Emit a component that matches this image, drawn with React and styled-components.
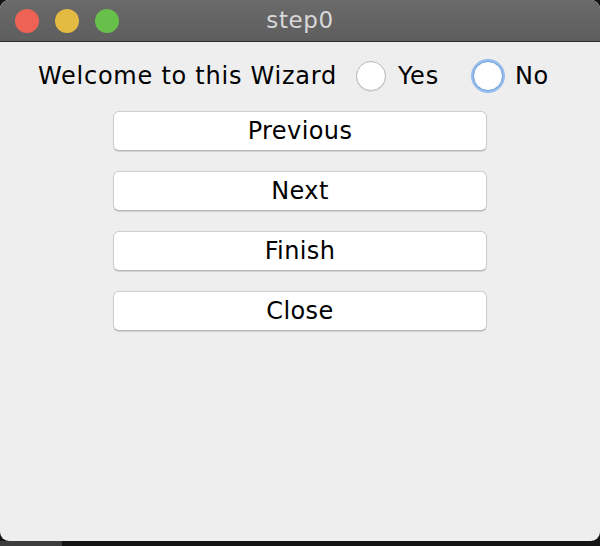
import React from "react";
import styled, { createGlobalStyle } from "styled-components";

const Global = createGlobalStyle`
  html, body { margin: 0; padding: 0; background: #141414; }
  body { width: 600px; height: 546px; overflow: hidden; font-family: "DejaVu Sans", "Liberation Sans", sans-serif; }
`;

const Window = styled.div`
  width: 600px;
  height: 541px;
  display: flex;
  flex-direction: column;
  border-radius: 9px;
  overflow: hidden;
  background: #eeeeee;
`;

const Dock = styled.div`
  height: 5px;
  display: flex;
`;

const DockPiece = styled.span`
  width: 62px;
  background: #3c3c3c;
`;

const TitleBar = styled.div`
  height: 41px;
  flex: none;
  display: grid;
  grid-template-columns: 1fr auto 1fr;
  align-items: center;
  background: linear-gradient(#6b6a6b, #5f5e5f);
  border-bottom: 1px solid #2c2c2c;
`;

const Lights = styled.div`
  display: flex;
  gap: 16px;
  padding-left: 15px;
`;

const Light = styled.span`
  width: 24px;
  height: 24px;
  border-radius: 50%;
  background: ${(p) => p.$c};
`;

const Title = styled.div`
  color: #d8d8d8;
  font-size: 23px;
  letter-spacing: 0.6px;
  padding-bottom: 1px;
`;

const Content = styled.div`
  flex: 1;
  display: flex;
  flex-direction: column;
  align-items: center;
  padding-top: 16px;
`;

const Row = styled.div`
  display: flex;
  align-items: center;
  height: 36px;
  color: #000;
  font-size: 24px;
  letter-spacing: 0.75px;
  margin-right: 13px;
`;

const Label = styled.span`
  margin-right: 19px;
`;

const RadioItem = styled.label`
  display: flex;
  align-items: center;
  margin-right: ${(p) => p.$mr}px;
`;

const Circle = styled.span`
  width: 30px;
  height: 30px;
  box-sizing: border-box;
  border-radius: 50%;
  background: #fff;
  border: 1px solid ${(p) => (p.$focus ? "#6a9ee0" : "#b9b9b9")};
  box-shadow: ${(p) =>
    p.$focus ? "0 0 0 2px rgba(120,170,235,0.75)" : "0 1px 1px rgba(0,0,0,0.08)"};
  margin-right: 12px;
`;

const Buttons = styled.div`
  display: flex;
  flex-direction: column;
  gap: 20px;
  margin-top: 17px;
`;

const Button = styled.button`
  width: 374px;
  height: 40px;
  background: #fff;
  border: 1px solid #cfcfcf;
  border-bottom-color: #b4b4b4;
  border-radius: 6px;
  box-shadow: 0 1px 1px rgba(0,0,0,0.12);
  font-family: "DejaVu Sans", "Liberation Sans", sans-serif;
  font-size: 24px;
  letter-spacing: 0.4px;
  color: #000;
  padding: 0;
`;

export default function App() {
  return (
    <>
      <Global />
      <Window>
        <TitleBar>
          <Lights>
            <Light $c="#ee6155" />
            <Light $c="#e3bb43" />
            <Light $c="#66c049" />
          </Lights>
          <Title>step0</Title>
          <div />
        </TitleBar>
        <Content>
          <Row>
            <Label>Welcome to this Wizard</Label>
            <RadioItem $mr={34}>
              <Circle />
              Yes
            </RadioItem>
            <RadioItem $mr={0}>
              <Circle $focus />
              No
            </RadioItem>
          </Row>
          <Buttons>
            <Button>Previous</Button>
            <Button>Next</Button>
            <Button>Finish</Button>
            <Button>Close</Button>
          </Buttons>
        </Content>
      </Window>
      <Dock>
        <DockPiece />
      </Dock>
    </>
  );
}
